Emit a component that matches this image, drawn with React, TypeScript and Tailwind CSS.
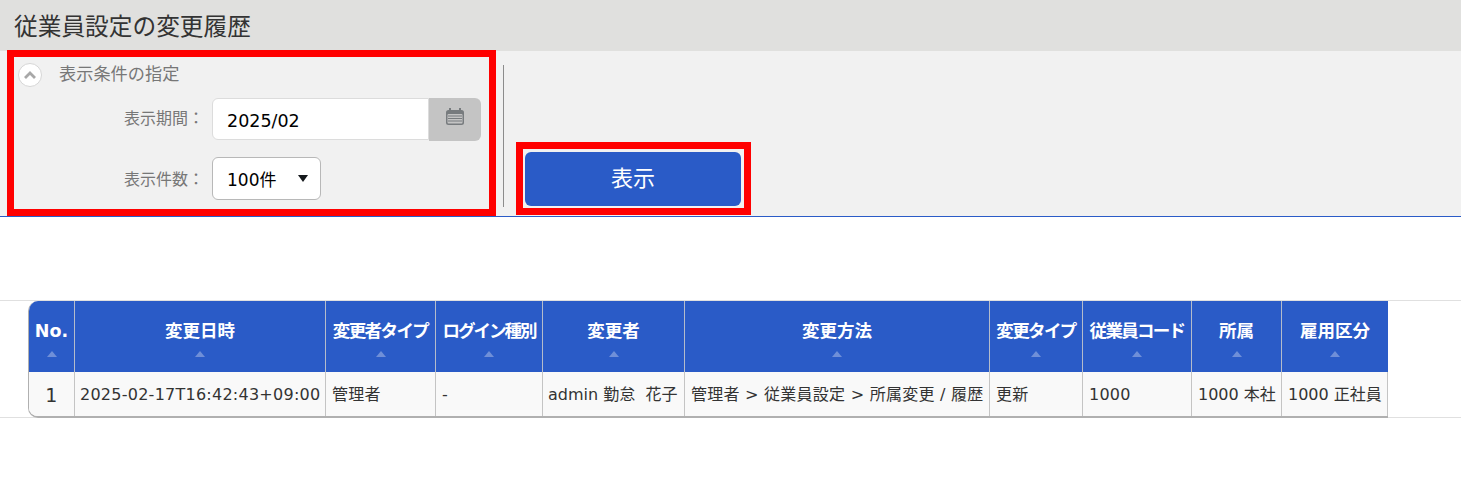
const font = { fontFamily: '"DejaVu Sans", "Noto Sans CJK JP", sans-serif' };

const columns = [
  { title: "No.", width: 46, value: "1", cell: "text-center text-[19px]", head: "" },
  { title: "変更日時", width: 251, value: "2025-02-17T16:42:43+09:00", cell: "px-[5px]", head: "" },
  { title: "変更者タイプ", width: 110, value: "管理者", cell: "px-[6px]", head: "tracking-[-1.6px]" },
  { title: "ログイン種別", width: 107, value: "-", cell: "px-[6px]", head: "tracking-[-2px]" },
  { title: "変更者", width: 142, value: "admin 勤怠\u00a0\u00a0花子", cell: "px-[5px] tracking-[0px]", head: "" },
  { title: "変更方法", width: 305, value: "管理者 > 従業員設定 > 所属変更 / 履歴", cell: "px-[6px]", head: "" },
  { title: "変更タイプ", width: 93, value: "更新", cell: "px-[6px]", head: "tracking-[-1.6px]" },
  { title: "従業員コード", width: 109, value: "1000", cell: "px-[6px]", head: "tracking-[-1.7px]" },
  { title: "所属", width: 90, value: "1000 本社", cell: "px-[6px] tracking-[0px]", head: "" },
  { title: "雇用区分", width: 106, value: "1000 正社員", cell: "px-[6px] tracking-[0px]", head: "" },
];

function CalendarIcon() {
  return (
    <svg width="20" height="20" viewBox="0 0 20 20" aria-hidden="true">
      <rect x="1" y="3" width="18" height="15" rx="2.5" fill="#777b7e" />
      <rect x="4" y="1" width="2" height="4" fill="#777b7e" />
      <rect x="14" y="1" width="2" height="4" fill="#777b7e" />
      <rect x="2.5" y="7" width="15" height="9.5" rx="1" fill="#c4c4c4" />
      <path d="M3 9h14M3 11.5h14M3 14h14" stroke="#777b7e" strokeWidth="1.2" />
    </svg>
  );
}

export default function App() {
  return (
    <div className="relative h-[477px] w-[1461px] overflow-hidden bg-white" style={font}>
      <header className="flex h-[51px] items-center bg-[#e0e0de] pl-[14px] pt-[4px]">
        <h1 className="text-[23.7px] font-normal leading-none text-[#333333]">従業員設定の変更履歴</h1>
      </header>

      <section className="flex h-[166px] border-b border-[#2a5bc7] bg-[#f1f1f1]">
        <div className="w-[503px] shrink-0 pl-[18px] pt-[12px]">
          <div className="flex h-[24px] items-center">
            <span className="flex h-[24px] w-[24px] items-center justify-center rounded-full border border-[#d6d6d6] bg-white">
              <svg width="14" height="9" viewBox="0 0 14 9" aria-hidden="true">
                <path d="M2 7l5-5 5 5" fill="none" stroke="#a8a8a8" strokeWidth="2.8" />
              </svg>
            </span>
            <span className="ml-[17px] text-[17.2px] text-[#777777]">表示条件の指定</span>
          </div>
          <div className="mt-[11px] flex h-[43px] items-center">
            <span className="w-[194px] pb-[1px] pr-[8px] text-right text-[16px] text-[#777777]">表示期間：</span>
            <div className="flex h-[43px] w-[269px]">
              <div className="flex h-[42px] w-[217px] items-center rounded-l-[6px] border border-[#dcdcdc] bg-white pl-[14px] pt-[5px] text-[17.5px] text-black">
                2025/02
              </div>
              <div className="flex h-[43px] w-[52px] items-center justify-center rounded-r-[6px] bg-[#c4c4c4] pb-[6px]">
                <CalendarIcon />
              </div>
            </div>
          </div>
          <div className="mt-[16px] flex h-[43px] items-center">
            <span className="w-[194px] pr-[8px] pt-[3px] text-right text-[16px] text-[#777777]">表示件数：</span>
            <div className="flex h-[43px] w-[109px] items-center justify-between rounded-[6px] border border-[#b8b8b8] bg-white pl-[14px] pr-[12px] pt-[4px] text-[17px] text-black">
              <span>100件</span>
              <span className="mb-[4px] h-0 w-0 border-x-[5.5px] border-t-[7px] border-x-transparent border-t-[#15181c]" />
            </div>
          </div>
        </div>

        <div className="mt-[14px] h-[142px] w-px bg-[#8c8c8c]" />

        <div className="ml-[21px] mt-[101px]">
          <button className="flex h-[54px] w-[216px] items-center justify-center rounded-[6px] bg-[#2a5bc7] pb-[1px] text-[22px] text-white">
            表示
          </button>
        </div>
      </section>

      <div className="mt-[83px] h-[118px] border-y border-[#e0e0e0]">
        <div className="ml-[28px] w-[1360px]">
          <table className="w-[1360px] table-fixed border-separate border-spacing-0 overflow-hidden rounded-l-[10px] border-b-2 border-l border-[#b0b0b0]">
            <colgroup>
              {columns.map((c) => (
                <col key={c.title} style={{ width: c.width }} />
              ))}
            </colgroup>
            <thead>
              <tr>
                {columns.map((c, i) => (
                  <th
                    key={c.title}
                    className={`h-[71px] bg-[#2a5bc7] p-0 align-top ${i < columns.length - 1 ? "border-r border-[#b4bccb]" : ""}`}
                  >
                    <div className={`mt-[20px] whitespace-nowrap text-[17.5px] font-bold leading-[20px] text-white ${c.head}`}>{c.title}</div>
                    <div className="mx-auto mt-[10px] h-0 w-0 border-x-[5.5px] border-b-[6px] border-x-transparent border-b-[#6f8fd8]" />
                  </th>
                ))}
              </tr>
            </thead>
            <tbody>
              <tr>
                {columns.map((c) => (
                  <td
                    key={c.title}
                    className={`h-[44px] whitespace-nowrap border-r border-[#c4c4c4] bg-[#f9f9f9] pt-[2px] text-[16px] tracking-[0.25px] text-[#333333] ${c.cell}`}
                  >
                    {c.value}
                  </td>
                ))}
              </tr>
            </tbody>
          </table>
        </div>
      </div>

      <div className="pointer-events-none absolute left-[7px] top-[50px] h-[166px] w-[489px] border-[7px] border-[#ff0000]" />
      <div className="pointer-events-none absolute left-[516px] top-[142px] h-[73px] w-[235px] border-[7px] border-[#ff0000]" />
    </div>
  );
}
